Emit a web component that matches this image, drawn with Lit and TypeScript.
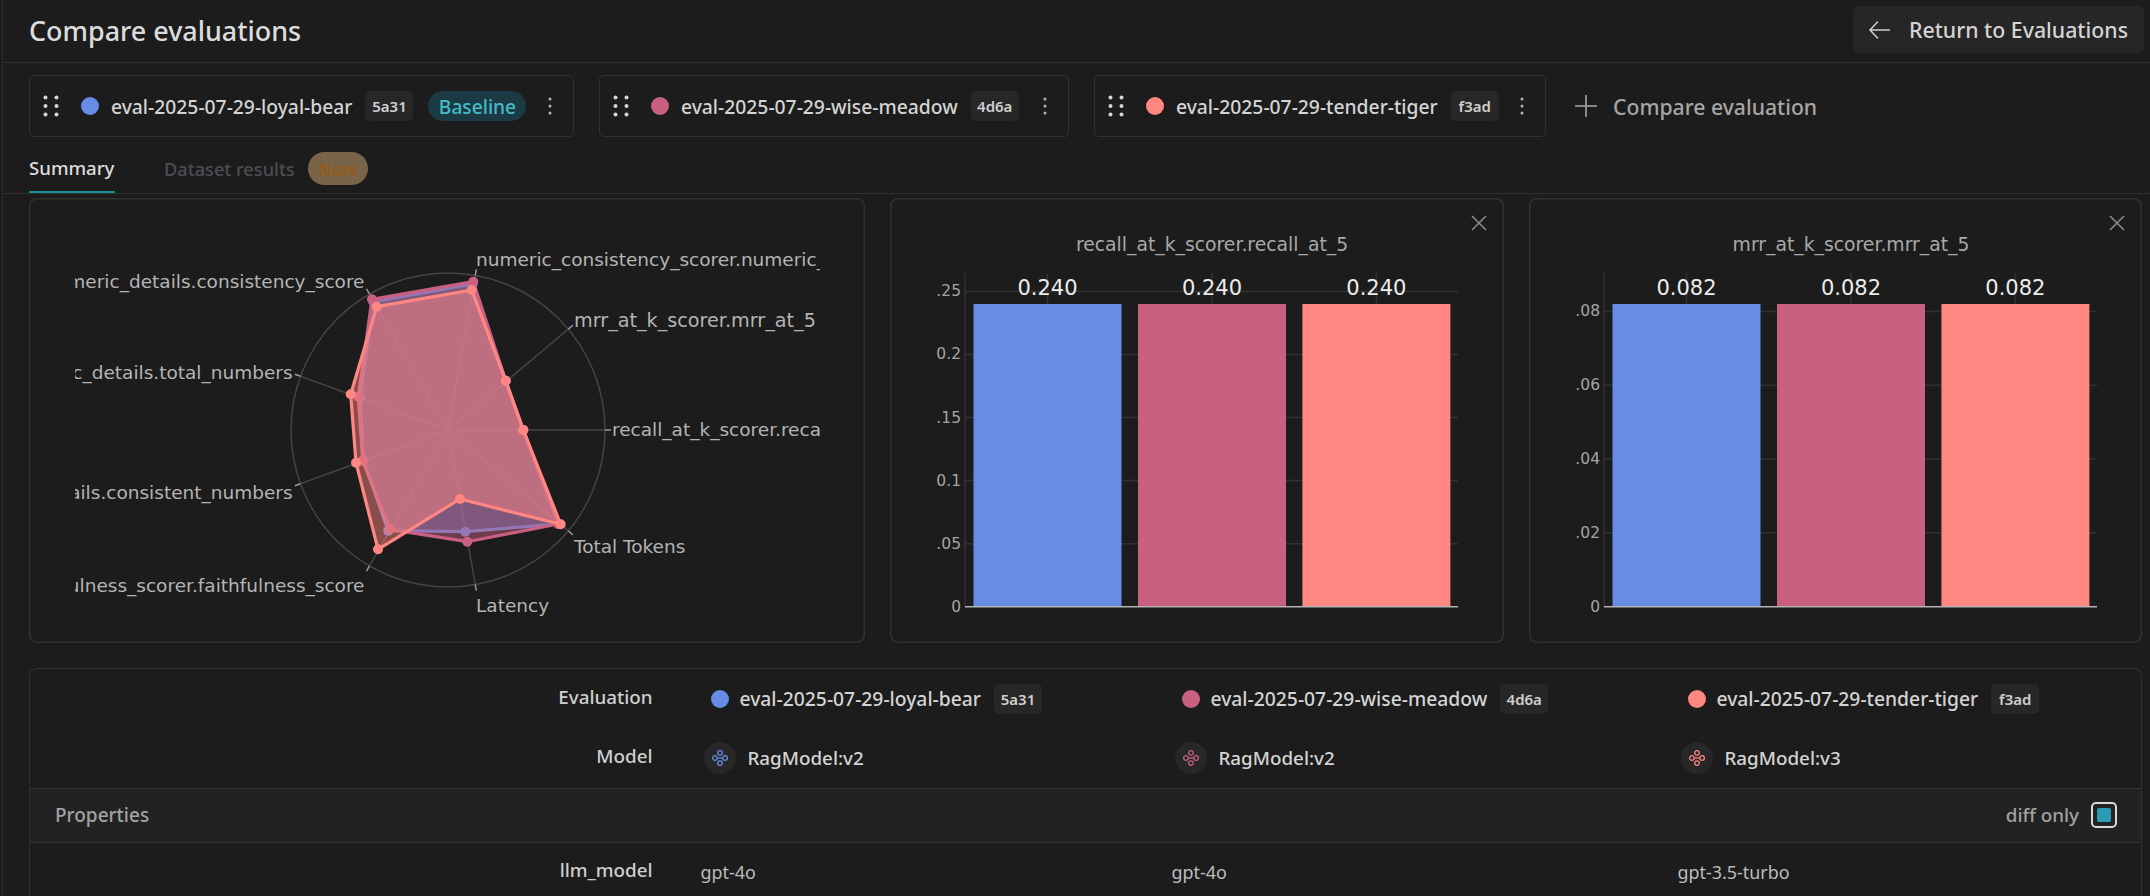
import { LitElement, html, css, svg } from "lit";
import { customElement } from "lit/decorators.js";

const BLUE = "#678ce6";
const PINK = "#c96080";
const SALMON = "#ff8681";

type Pt = [number, number];
const SERIES: { color: string; pts: Pt[] }[] = [
  { color: BLUE, pts: [[523.3, 430], [505.7, 380.7], [472.7, 284], [373.3, 301.7], [360, 397.3], [363.3, 460], [388.3, 530.7], [465.3, 531.7], [558.3, 524]] },
  { color: PINK, pts: [[523.3, 430], [505.7, 380.7], [473.3, 281.7], [372, 299.3], [358.3, 396.7], [362.7, 461], [390, 529.3], [467.3, 541.7], [558.3, 524]] },
  { color: SALMON, pts: [[523.3, 430], [505.7, 380.7], [471.7, 290], [376.7, 306.7], [350.7, 394.3], [356, 462.7], [378, 549.3], [460, 499], [560.7, 524.3]] },
];

const CX = 448;
const CY = 430;
const R = 157;

const RADAR_LABELS: { x: number; y: number; anchor: string; text: string; cls?: string }[] = [
  { x: 612, y: 429, anchor: "start", text: "recall_at_k_scorer.recall_at_5" },
  { x: 574, y: 320, anchor: "start", text: "mrr_at_k_scorer.mrr_at_5", cls: "wide" },
  { x: 476, y: 259, anchor: "start", text: "numeric_consistency_scorer.numeric_details" },
  { x: 364.5, y: 281, anchor: "end", text: "numeric_details.consistency_score" },
  { x: 292.6, y: 372, anchor: "end", text: "numeric_details.total_numbers" },
  { x: 292.6, y: 492, anchor: "end", text: "numeric_details.consistent_numbers" },
  { x: 364.5, y: 585, anchor: "end", text: "faithfulness_scorer.faithfulness_score" },
  { x: 476, y: 605.7, anchor: "start", text: "Latency" },
  { x: 574, y: 546, anchor: "start", text: "Total Tokens" },
];

function radar() {
  const angles = Array.from({ length: 9 }, (_, i) => (i * 40 * Math.PI) / 180);
  return html`<svg class="plot" viewBox="0 0 836 445">
    <defs>
      <clipPath id="radar-clip"><rect x="75" y="198" width="745" height="445"></rect></clipPath>
    </defs>
    <g transform="translate(-29 -198)">
      <circle class="grid" cx=${CX} cy=${CY} r=${R}></circle>
      ${angles.map((a) => {
        const c = Math.cos(a);
        const s = Math.sin(a);
        return svg`
          <line class="grid" x1=${CX} y1=${CY} x2=${CX + R * c} y2=${CY - R * s}></line>
          <line class="tick" x1=${CX + R * c} y1=${CY - R * s} x2=${CX + (R + 6) * c} y2=${CY - (R + 6) * s}></line>`;
      })}
      ${SERIES.map(
        (s) => svg`
          <polygon points=${s.pts.map((p) => p.join(",")).join(" ")} fill=${s.color} fill-opacity="0.48" stroke=${s.color} stroke-width="3.2" stroke-linejoin="round"></polygon>
          ${s.pts.map((p) => svg`<circle cx=${p[0]} cy=${p[1]} r="5" fill=${s.color}></circle>`)}`
      )}
      <g clip-path="url(#radar-clip)">
        ${RADAR_LABELS.map(
          (l) => svg`<text class="axis-label ${l.cls ?? ""}" x=${l.x} y=${l.y} text-anchor=${l.anchor} dominant-baseline="central">${l.text}</text>`
        )}
      </g>
    </g>
  </svg>`;
}

function bars(title: string, value: string, raw: number, ticks: [number, string][], width: number) {
  const base = 408.7;
  const top = 106;
  const scale = (base - top) / raw;
  const bx: [number, string][] = [[83.5, BLUE], [248, PINK], [412.4, SALMON]];
  const closeX = width - 25;
  return html`<svg class="plot" viewBox="0 0 ${width} 445">
    <text class="chart-title" x="322" y="46" text-anchor="middle" dominant-baseline="central">${title}</text>
    <path class="close" d="M${closeX - 7} 18 L${closeX + 7} 32 M${closeX + 7} 18 L${closeX - 7} 32"></path>
    <line class="grid-soft" x1="75" y1="75" x2="75" y2=${base}></line>
    ${ticks.map(([v, label]) => {
      const y = base - v * scale;
      return svg`
        ${v > 0 ? svg`<line class="grid-soft" x1="75" y1=${y} x2="568" y2=${y}></line>` : ""}
        <text class="tick-label" x="71" y=${y} text-anchor="end" dominant-baseline="central">${label}</text>`;
    })}
    ${bx.map(
      ([x]) => svg`<line class="grid-soft" x1=${x + 74} y1="75" x2=${x + 74} y2=${base}></line>`
    )}
    ${bx.map(
      ([x, c]) => svg`
        <rect x=${x} y=${top} width="148" height=${base - top} fill=${c}></rect>
        <text class="bar-value" x=${x + 74} y="90" text-anchor="middle" dominant-baseline="central">${value}</text>`
    )}
    <line class="zero" x1="75" y1=${base} x2="568" y2=${base}></line>
  </svg>`;
}

function modelIcon(color: string) {
  return html`<span class="model-icon">
    <svg viewBox="0 0 16 16" width="16" height="16" fill="none" stroke=${color} stroke-width="1.3">
      <circle cx="8" cy="2.9" r="2.3"></circle>
      <circle cx="8" cy="13.1" r="2.3"></circle>
      <circle cx="2.9" cy="8" r="2.3"></circle>
      <circle cx="13.1" cy="8" r="2.3"></circle>
      <path d="M5.2 8h5.6"></path>
    </svg>
  </span>`;
}

const drag = html`<svg class="drag" viewBox="0 0 16 22" width="16" height="22" fill="#d6d6d6">
  <circle cx="2.5" cy="2.6" r="2"></circle><circle cx="13.5" cy="2.6" r="2"></circle>
  <circle cx="2.5" cy="11" r="2"></circle><circle cx="13.5" cy="11" r="2"></circle>
  <circle cx="2.5" cy="19.4" r="2"></circle><circle cx="13.5" cy="19.4" r="2"></circle>
</svg>`;

const kebab = html`<svg class="kebab" viewBox="0 0 4 18" width="4" height="18" fill="#b4b4b4">
  <circle cx="2" cy="2" r="1.5"></circle><circle cx="2" cy="9" r="1.5"></circle><circle cx="2" cy="16" r="1.5"></circle>
</svg>`;

const EVALS = [
  { name: "eval-2025-07-29-loyal-bear", id: "5a31", color: BLUE, model: "RagModel:v2", llm: "gpt-4o" },
  { name: "eval-2025-07-29-wise-meadow", id: "4d6a", color: PINK, model: "RagModel:v2", llm: "gpt-4o" },
  { name: "eval-2025-07-29-tender-tiger", id: "f3ad", color: SALMON, model: "RagModel:v3", llm: "gpt-3.5-turbo" },
];

@customElement("app-root")
export class AppRoot extends LitElement {
  static styles = css`
    :host {
      display: block;
      width: 2150px;
      height: 896px;
      overflow: hidden;
      background: #1c1c1c;
      font-family: "Noto Sans", sans-serif;
      color: #d6d6d6;
    }
    .shell {
      margin-left: 2px;
      border-left: 1px solid #2e2e2e;
      height: 896px;
      box-sizing: border-box;
    }
    .header {
      height: 62px;
      border-bottom: 1px solid #2f2f2f;
      display: flex;
      align-items: flex-start;
      justify-content: space-between;
      padding: 0 6px 0 26px;
    }
    .title {
      font-size: 26.9px;
      font-weight: 500;
      line-height: 62px;
      color: #dcdcdc;
    }
    .return {
      margin-top: 6px;
      height: 47px;
      width: 291px;
      box-sizing: border-box;
      background: #262626;
      border-radius: 5px;
      display: flex;
      align-items: center;
      gap: 17px;
      padding-left: 15px;
      font-size: 21.3px;
      font-weight: 500;
      color: #d4d4d4;
      white-space: nowrap;
    }
    .selectors {
      display: flex;
      align-items: center;
      gap: 25px;
      padding: 12px 0 0 26px;
    }
    .selector {
      height: 62px;
      box-sizing: border-box;
      border: 1.5px solid #303132;
      border-radius: 5px;
      display: flex;
      align-items: center;
      padding-left: 13px;
    }
    .s0 { width: 545px; }
    .s1 { width: 470px; }
    .s2 { width: 452px; }
    .drag { flex: none; margin-right: 22px; }
    .dot {
      flex: none;
      width: 18px;
      height: 18px;
      border-radius: 50%;
    }
    .name {
      font-size: 19.3px;
      font-weight: 500;
      color: #d4d4d4;
      margin-left: 12px;
      white-space: nowrap;
    }
    .tag {
      flex: none;
      margin-left: 13px;
      width: 48px;
      height: 30px;
      border-radius: 5px;
      background: #272727;
      display: flex;
      align-items: center;
      justify-content: center;
      font-size: 15px;
      font-weight: 600;
      color: #cfcfcf;
    }
    .baseline {
      flex: none;
      margin-left: 15px;
      height: 30px;
      width: 98px;
      border-radius: 15px;
      background: #1b3a44;
      color: #45bcc8;
      font-size: 19.2px;
      font-weight: 500;
      display: flex;
      align-items: center;
      justify-content: center;
    }
    .kebab { flex: none; margin-left: auto; margin-right: 21px; }
    .add {
      display: flex;
      align-items: center;
      gap: 15px;
      margin-left: 3px;
      font-size: 21.2px;
      font-weight: 500;
      color: #a6a6a6;
      white-space: nowrap;
    }
    .tabs {
      height: 56px;
      border-bottom: 1px solid #2f2f2f;
      display: flex;
      align-items: stretch;
      padding-left: 26px;
    }
    .tab {
      display: flex;
      align-items: center;
      height: 56px;
      box-sizing: border-box;
      padding-top: 7px;
      font-weight: 500;
    }
    .tab.on {
      font-size: 18.6px;
      color: #dcdcdc;
      border-bottom: 2px solid #1f8a9b;
      width: 86px;
      margin-right: 49px;
    }
    .tab.off { color: #4b4e53; font-size: 18.2px; }
    .new {
      margin-left: 13px;
      width: 60px;
      height: 33px;
      border-radius: 17px;
      background: #7a6449;
      color: #955a16;
      display: flex;
      align-items: center;
      justify-content: center;
      font-size: 18.2px;
      font-weight: 500;
    }
    .cards {
      display: flex;
      gap: 25px;
      padding: 4px 8px 0 26px;
    }
    .card {
      height: 445px;
      box-shadow: inset 0 0 0 1.5px #303132;
      border-radius: 8px;
      overflow: hidden;
    }
    .c-radar { width: 836px; }
    .c-a { width: 614px; }
    .c-b { width: 613px; }
    .plot { display: block; width: 100%; height: 100%; }
    .grid { stroke: #444; stroke-width: 1.5; fill: none; }
    .tick { stroke: #9a9a9a; stroke-width: 1.5; }
    .grid-soft { stroke: #313131; stroke-width: 1.5; }
    .zero { stroke: #b4b4b4; stroke-width: 1.5; }
    .close { stroke: #8d8d8d; stroke-width: 1.5; fill: none; }
    .axis-label, .chart-title, .tick-label, .bar-value {
      font-family: "DejaVu Sans", sans-serif;
    }
    .axis-label { font-size: 18.5px; fill: #b4b4b4; }
    .axis-label.wide { font-size: 19.2px; }
    .chart-title { font-size: 18.8px; fill: #a8a8a8; }
    .tick-label { font-size: 15.5px; fill: #a4a4a4; }
    .bar-value { font-size: 21px; fill: #ececec; }
    .table {
      margin: 25px 8px 0 26px;
      border: 1.5px solid #303132;
      border-bottom: none;
      border-radius: 8px 8px 0 0;
      box-sizing: border-box;
      height: 300px;
    }
    .row {
      display: grid;
      grid-template-columns: 670.5px 471px 506px 1fr;
      align-items: center;
    }
    .r-eval { height: 59px; }
    .r-model { height: 60.5px; }
    .r-llm { height: 58px; }
    .head-block { height: 119.5px; box-sizing: border-box; border-bottom: 1.5px solid #343434; }
    .label {
      text-align: right;
      padding-right: 48px;
      padding-bottom: 4px;
      font-size: 18.8px;
      font-weight: 500;
      color: #cfcfcf;
    }
    .cell { display: flex; align-items: center; }
    .cell.ev { padding-left: 10px; }
    .cell.ev .name { margin-left: 11px; }
    .cell.mo { padding-left: 3px; }
    .model-icon {
      flex: none;
      width: 32px;
      height: 32px;
      border-radius: 50%;
      background: #272727;
      display: flex;
      align-items: center;
      justify-content: center;
    }
    .model-name {
      margin-left: 12px;
      font-size: 18.8px;
      font-weight: 500;
      color: #d4d4d4;
    }
    .props {
      height: 54px;
      box-sizing: border-box;
      background: #222222;
      border-bottom: 1.5px solid #343434;
      display: flex;
      align-items: center;
      justify-content: space-between;
      padding: 0 24px 0 25px;
      font-size: 19px;
      font-weight: 500;
      color: #a2a2a2;
    }
    .diff { display: flex; align-items: center; gap: 12px; font-size: 18.8px; }
    .check {
      width: 26px;
      height: 26px;
      box-sizing: border-box;
      border: 2px solid #d8d8d8;
      border-radius: 5px;
      padding: 4px;
    }
    .check div { width: 100%; height: 100%; background: #2b9cb3; border-radius: 2px; }
    .val { font-size: 17.9px; color: #bdbdbd; }
  `;

  render() {
    return html`<div class="shell">
      <div class="header">
        <div class="title">Compare evaluations</div>
        <div class="return">
          <svg viewBox="0 0 24 24" width="24" height="24" fill="none" stroke="#d0d0d0" stroke-width="1.5">
            <path d="M22 12H2M10 3.5L2 12l8 8.5"></path>
          </svg>
          <span>Return to Evaluations</span>
        </div>
      </div>
      <div class="selectors">
        ${EVALS.map(
          (e, i) => html`<div class="selector s${i}">
            ${drag}
            <span class="dot" style="background:${e.color}"></span>
            <span class="name">${e.name}</span>
            <span class="tag">${e.id}</span>
            ${i === 0 ? html`<span class="baseline">Baseline</span>` : ""}
            ${kebab}
          </div>`
        )}
        <div class="add">
          <svg viewBox="0 0 24 24" width="24" height="24" fill="none" stroke="#a6a6a6" stroke-width="1.6">
            <path d="M12 1v22M1 12h22"></path>
          </svg>
          <span>Compare evaluation</span>
        </div>
      </div>
      <div class="tabs">
        <div class="tab on">Summary</div>
        <div class="tab off">Dataset results<span class="new">New</span></div>
      </div>
      <div class="cards">
        <div class="card c-radar">${radar()}</div>
        <div class="card c-a">
          ${bars("recall_at_k_scorer.recall_at_5", "0.240", 0.24, [[0, "0"], [0.05, ".05"], [0.1, "0.1"], [0.15, ".15"], [0.2, "0.2"], [0.25, ".25"]], 614)}
        </div>
        <div class="card c-b">
          ${bars("mrr_at_k_scorer.mrr_at_5", "0.082", 0.082, [[0, "0"], [0.02, ".02"], [0.04, ".04"], [0.06, ".06"], [0.08, ".08"]], 613)}
        </div>
      </div>
      <div class="table">
        <div class="head-block">
          <div class="row r-eval">
            <div class="label">Evaluation</div>
            ${EVALS.map(
              (e) => html`<div class="cell ev">
                <span class="dot" style="background:${e.color}"></span>
                <span class="name">${e.name}</span>
                <span class="tag">${e.id}</span>
              </div>`
            )}
          </div>
          <div class="row r-model">
            <div class="label">Model</div>
            ${EVALS.map(
              (e) => html`<div class="cell mo">
                ${modelIcon(e.color)}
                <span class="model-name">${e.model}</span>
              </div>`
            )}
          </div>
        </div>
        <div class="props">
          <span>Properties</span>
          <div class="diff"><span>diff only</span><div class="check"><div></div></div></div>
        </div>
        <div class="row r-llm">
          <div class="label">llm_model</div>
          ${EVALS.map((e) => html`<div class="cell"><span class="val">${e.llm}</span></div>`)}
        </div>
      </div>
    </div>`;
  }
}
